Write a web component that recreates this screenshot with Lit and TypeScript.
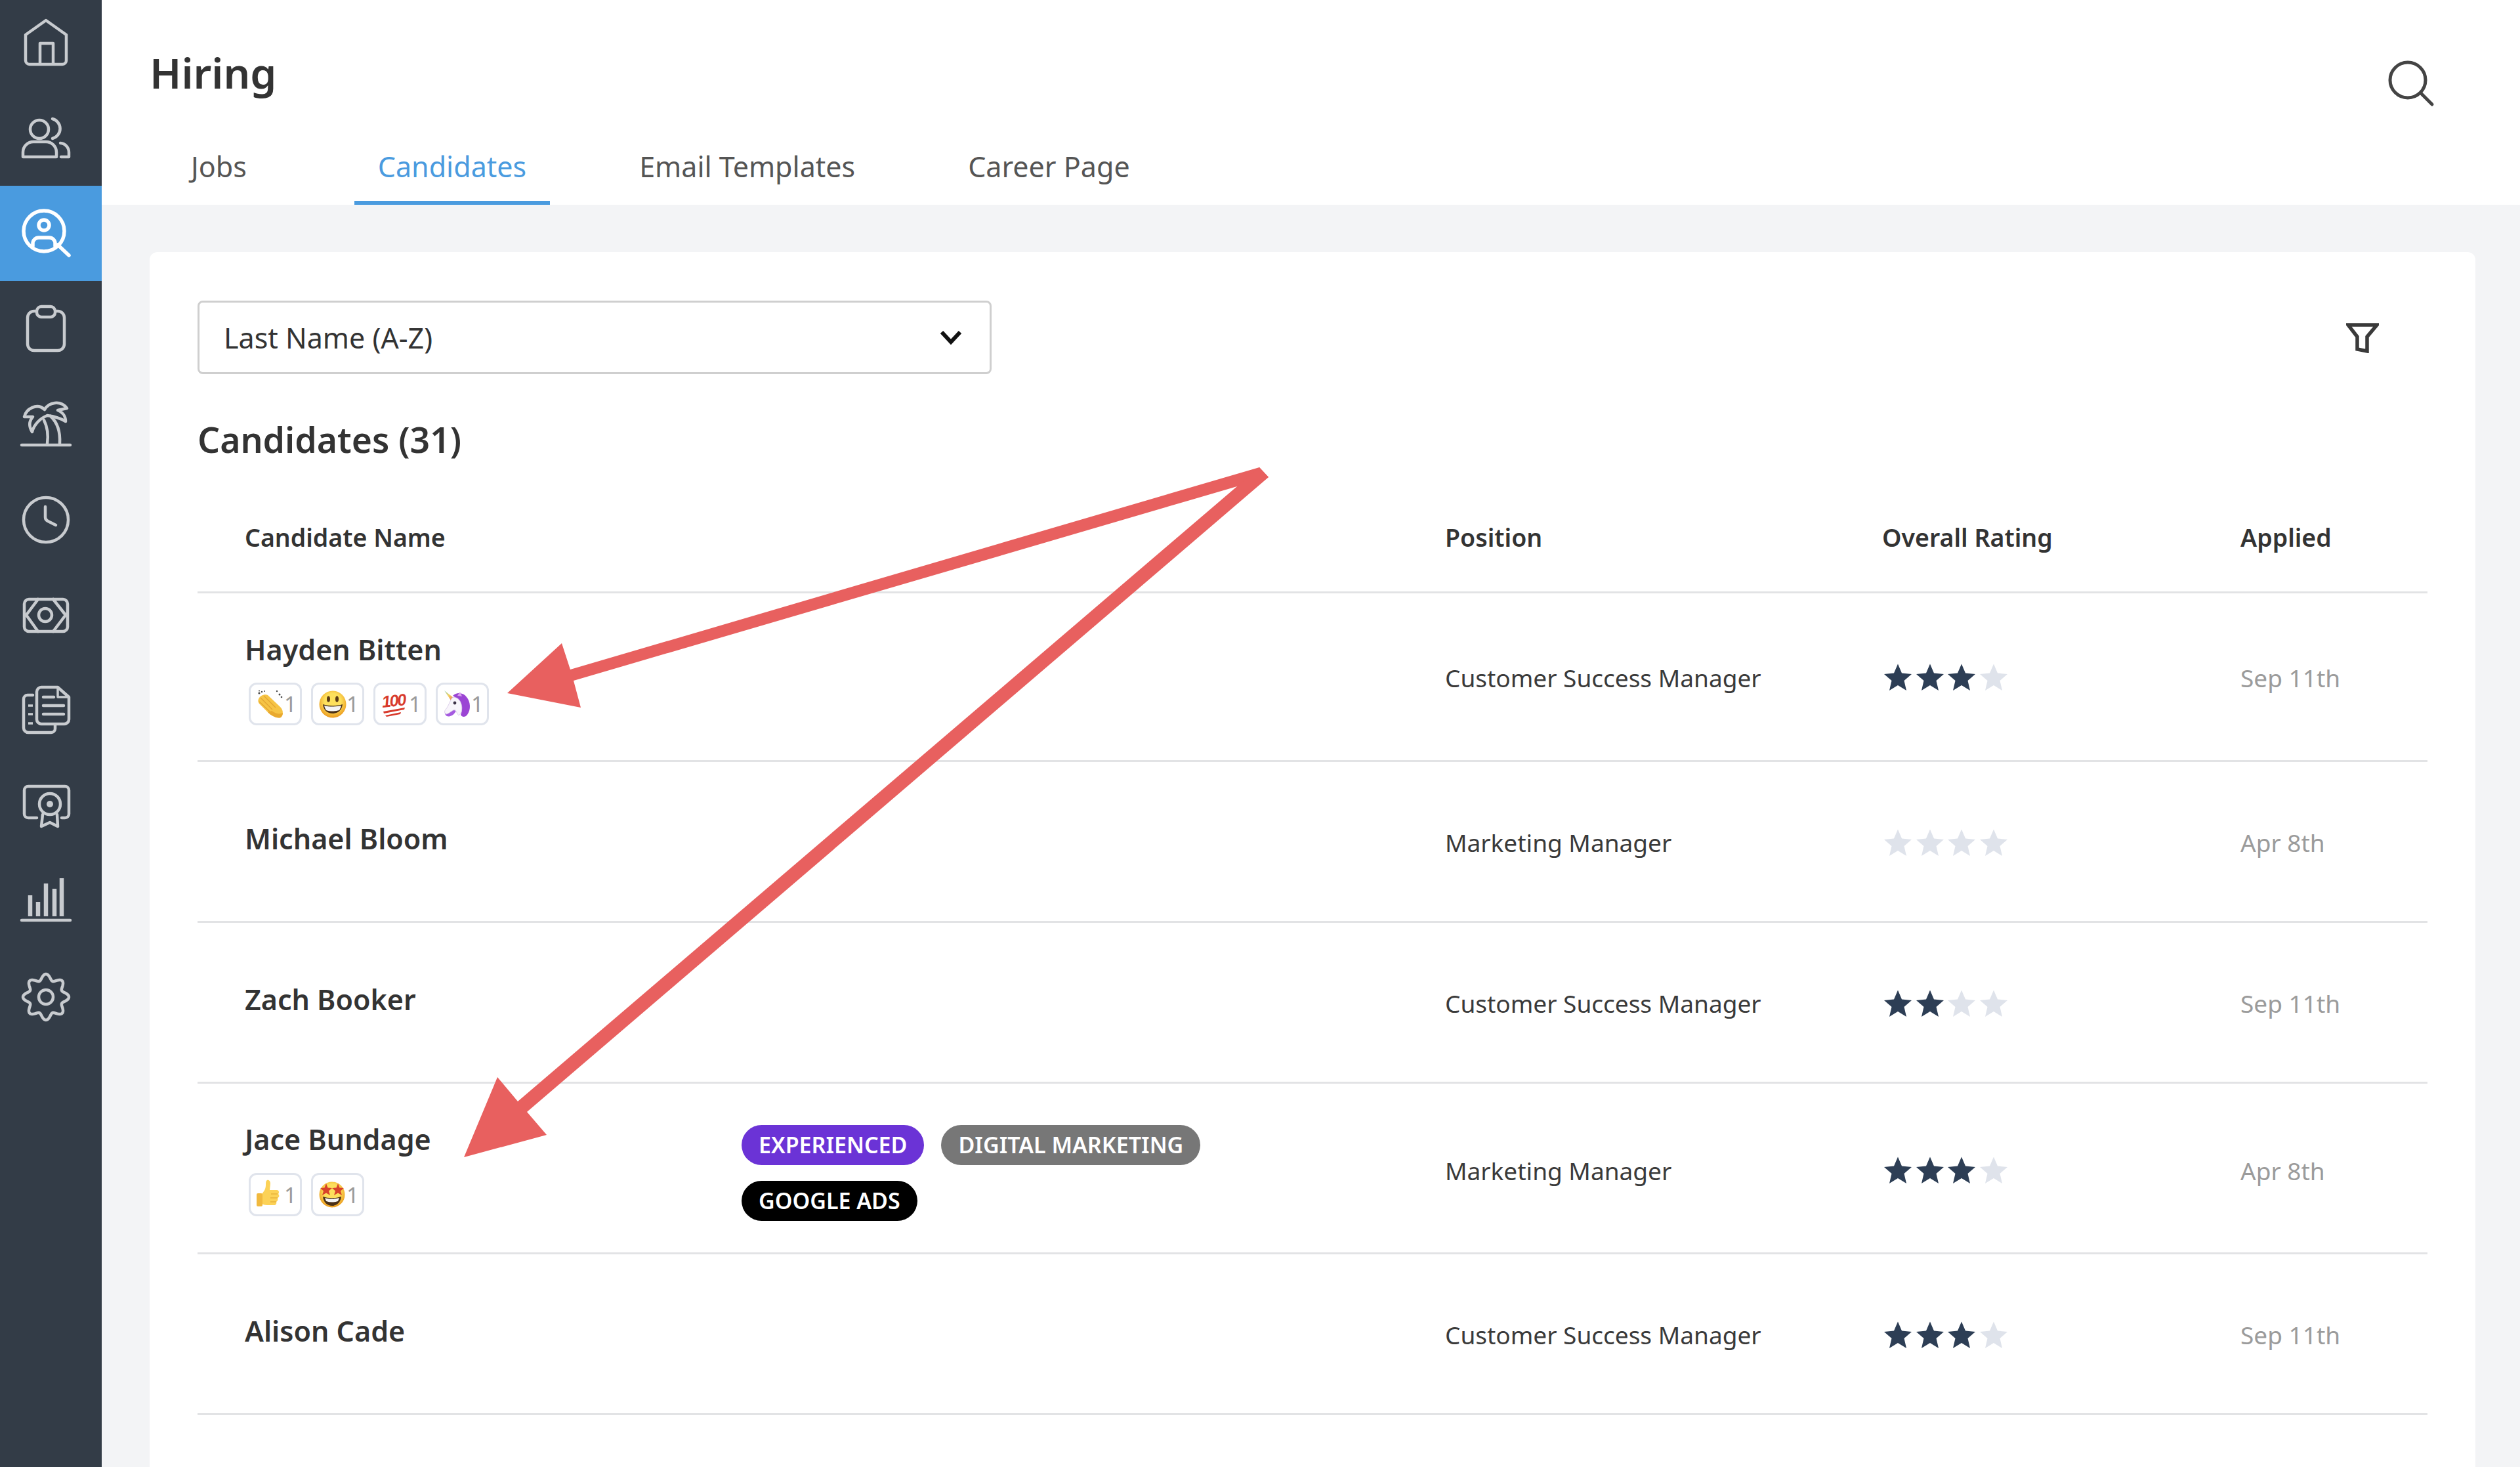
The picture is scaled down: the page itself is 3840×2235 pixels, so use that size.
import { LitElement, html, css, svg } from "lit";
import { customElement } from "lit/decorators.js";

// gear outline is a wavy circle, easier to compute than to write out
const gearPath = () => {
  const pts: string[] = [];
  for (let i = 0; i < 160; i++) {
    const a = (i / 160) * Math.PI * 2;
    const r = 30.5 + 4.5 * Math.cos(8 * a);
    pts.push(`${(40 + r * Math.sin(a)).toFixed(2)} ${(40 - r * Math.cos(a)).toFixed(2)}`);
  }
  return `M${pts.join("L")}Z`;
};

const NAV = [
  svg`<path d="M9 28 40 6l31 22v39a6 6 0 0 1-6 6H15a6 6 0 0 1-6-6Z"/><path d="M31 72V41h20v31"/>`,
  svg`<circle cx="30" cy="27" r="14"/><path d="M5 69v-7a16 16 0 0 1 16-16h19a16 16 0 0 1 16 16v7Z"/><path d="M50 11a15.500 15.500 0 0 1 0 30"/><path d="M62 48a14 14 0 0 1 13 14v7H63"/>`,
  svg`<circle cx="37" cy="37" r="31"/><circle cx="37" cy="28" r="8"/><path d="M20 60v-4a9 9 0 0 1 9-9h16a9 9 0 0 1 9 9v4"/><path d="m58 58 17 16"/>`,
  svg`<rect x="12" y="13" width="56" height="60" rx="10"/><rect x="26" y="6" width="28" height="16" rx="7" class="plug"/>`,
  svg`<path d="M3 72h74"/><path d="M42 70c2-14 0-26-5-36M61 70c1-17-3-32-14-42"/><path d="M7 29C10 17 26 7 38 18 44 7 62 3 72 16l-14 3c8 3 12 10 12 17-10-6-20-8-28-9-10 4-20 13-23 25-5-8-5-16 1-23Z"/>`,
  svg`<circle cx="40" cy="40" r="34"/><path d="M39 20v16q0 4 4 6l12 6"/>`,
  svg`<rect x="7" y="16" width="66" height="49" rx="7"/><circle cx="39" cy="40" r="10"/><path d="M28 16 10 40l18 25M51 16l19 24-19 25"/>`,
  svg`<path d="M33 5h25l17 15v34a7 7 0 0 1-7 7H33a7 7 0 0 1-7-7V12a7 7 0 0 1 7-7Z"/><path d="M58 5v15h17" class="thin"/><path d="M36 20h16M36 33h31M36 46h31"/><path d="M20 17h-8a6 6 0 0 0-6 6v44a7 7 0 0 0 7 7h35a6 6 0 0 0 6-6v-5"/><path d="M13 33h7M13 46h7M13 60h7" class="thin"/>`,
  svg`<path d="M26 58H13a6 6 0 0 1-6-6V16a6 6 0 0 1 6-6h56a6 6 0 0 1 6 6v36a6 6 0 0 1-6 6h-5"/><circle cx="46" cy="37" r="16"/><circle cx="46" cy="37" r="5" class="dot"/><path d="m35 53-2 18 13-6 12 6-1-18"/>`,
  svg`<path d="M3 69h74"/><path d="M16 63V31M28 63V41M40 63V13M53 63V21M64 63V5" class="bar"/>`,
  svg`<path d="${gearPath()}"/><circle cx="40" cy="40" r="11"/>`,
];

const clap = svg`<g fill="#4a4a4a"><circle cx="4" cy="5" r="1.600"/><circle cx="8" cy="3" r="1.200"/><circle cx="12" cy="2" r="1"/><circle cx="4" cy="1.500" r="1"/><circle cx="31" cy="2" r="1.200"/><circle cx="35" cy="7" r="1.500"/><circle cx="38" cy="11" r="1.300"/></g>
  <path d="M3 14C5 9 12 6 17 8L36 26C41 31 41 37 37 42 31 44 23 40 17 34L5 22C2 19 2 16 3 14Z" fill="#f6c445"/>
  <path d="M6 12 24 30M11 9 29 27M4 18 20 33" stroke="#e2a432" stroke-width="1.200" fill="none"/>
  <path d="M37 42C31 44 23 40 17 34l6-2c6 4 11 6 17 3 0 3-1 5-3 7Z" fill="#e9a92f"/>`;

const grin = svg`<circle cx="21" cy="22" r="20.500" fill="url(#face)"/>
  <ellipse cx="14.500" cy="14" rx="2.500" ry="4.600" fill="#5a3a14"/><ellipse cx="27.500" cy="14" rx="2.500" ry="4.600" fill="#5a3a14"/>
  <path d="M6 22c9 3 21 3 30 0-1 9-7 14-15 14S7 31 6 22Z" fill="#4a3016"/>
  <path d="M8 24c8 2 18 2 26 0-1 4-2 5-3 7-6 2-14 2-20 0-1-2-2-3-3-7Z" fill="#f4f4f4"/>`;

const hundred = svg`<text x="1" y="25" class="hundred" transform="rotate(-6 20 20)">100</text>
  <path d="M3 33 36 27 35 30 4 36ZM6 39 30 34 29 37 8 41Z" fill="#d83a2c"/>`;

const unicorn = svg`<path d="M1 1 11 16 15 12Z" fill="url(#horn)"/>
  <path d="M14 9C20 3 30 4 35 11 41 18 42 30 36 38 33 42 28 42 26 38 29 32 28 24 24 18 21 13 17 11 14 9Z" fill="#9b45d4"/>
  <path d="M2 33C1 38 5 42 10 40 14 39 17 36 19 32L10 29Z" fill="#a55ae0"/>
  <path d="M13 12C19 10 25 14 27 22 29 29 27 36 23 39 20 36 19 31 17 30 13 31 9 36 4 37 1 36 1 32 3 30 7 26 9 18 13 12Z" fill="#f8f5fb" stroke="#d6c5e6" stroke-width="0.800"/>
  <circle cx="17" cy="20" r="2.400" fill="#3b3147"/>
  <path d="M21 9l4-6 3 7Z" fill="#d9a3ee"/>`;

const thumb = svg`<path d="M16 0c3-1 5 2 5 5l-1 10h11c3 0 4 4 2 6 2 2 2 5-1 6 1 3 0 5-2 6 1 3-1 5-3 5H16c-4 0-6-1-8-2V21c4-5 6-8 6-14 0-3 0-6 2-7Z" fill="#fcd257"/>
  <rect x="0" y="20" width="9" height="20" rx="2" fill="#f1b93e"/><path d="M22 21h10M21 27h11M21 33h9" stroke="#dea42f" stroke-width="1.100"/>`;

const starEye = (x: number) => svg`<path d="M${x} 5l2.500 6.500 6.500.500-5 4.500 2 6.500-6-3.500-6 3.500 2-6.500-5-4.500 6.500-.500Z" fill="#d8432a"/>`;
const starStruck = svg`<circle cx="20" cy="22" r="19.500" fill="url(#face)"/>${starEye(11)}${starEye(29)}
  <path d="M6 25c8 3 20 3 28 0-1 9-7 14-14 14S7 34 6 25Z" fill="#4a3016"/><path d="M9 27c7 2 15 2 22 0l-2 5c-6 2-12 2-18 0Z" fill="#f4f4f4"/>`;

const EMOJI: Record<string, unknown> = { clap, grin, hundred, unicorn, thumb, starStruck };

const STAR = "M22 1.500 28 15.500 43 17 31.500 27 35 42 22 34 9 42 12.500 27 1 17 16 15.500Z";

type Candidate = {
  name: string;
  position: string;
  rating: number;
  applied: string;
  reactions?: string[];
  tags?: [string, string][];
};

const CANDIDATES: Candidate[] = [
  { name: "Hayden Bitten", position: "Customer Success Manager", rating: 3, applied: "Sep 11th", reactions: ["clap", "grin", "hundred", "unicorn"] },
  { name: "Michael Bloom", position: "Marketing Manager", rating: 0, applied: "Apr 8th" },
  { name: "Zach Booker", position: "Customer Success Manager", rating: 2, applied: "Sep 11th" },
  {
    name: "Jace Bundage",
    position: "Marketing Manager",
    rating: 3,
    applied: "Apr 8th",
    reactions: ["thumb", "starStruck"],
    tags: [["EXPERIENCED", "purple"], ["DIGITAL MARKETING", "grey"], ["GOOGLE ADS", "black"]],
  },
  { name: "Alison Cade", position: "Customer Success Manager", rating: 3, applied: "Sep 11th" },
];

@customElement("app-root")
export class AppRoot extends LitElement {
  static override styles = css`
    :host {
      display: flex;
      position: relative;
      width: 3840px;
      height: 2235px;
      overflow: hidden;
      background: #f3f4f6;
      color: #333;
      font-family: "Noto Sans", sans-serif;
    }
    .sidebar {
      width: 155px;
      flex: none;
      background: #333c47;
    }
    .nav {
      margin-top: -8px;
    }
    .nav-item {
      height: 145.4px;
      display: flex;
      align-items: center;
      padding-left: 30px;
    }
    .nav-item svg {
      width: 80px;
      height: 80px;
      fill: none;
      stroke: #c8cbcf;
      stroke-width: 4.5;
      stroke-linecap: round;
      stroke-linejoin: round;
    }
    .nav-item .plug {
      fill: #333c47;
    }
    .nav-item .thin {
      stroke-width: 3.5;
      stroke-linecap: butt;
    }
    .nav-item .dot {
      fill: #c8cbcf;
      stroke: none;
    }
    .nav-item .bar {
      stroke-width: 6.5;
      stroke-linecap: butt;
    }
    .nav-item.active {
      background: #4a9bdf;
    }
    .nav-item.active svg {
      stroke: #fff;
      stroke-width: 5.5;
    }
    .main {
      flex: 1;
      min-width: 0;
    }
    .header {
      position: relative;
      height: 312px;
      background: #fff;
      padding-left: 73px;
      box-sizing: border-box;
    }
    h1 {
      margin: 0;
      padding-top: 66px;
      font-size: 64px;
      line-height: 90px;
      font-weight: 600;
      color: #333;
    }
    .search {
      position: absolute;
      left: 3480px;
      top: 88px;
      width: 80px;
      height: 80px;
      fill: none;
      stroke: #444;
      stroke-width: 5;
      stroke-linecap: round;
    }
    .tabs {
      display: flex;
      margin-top: 49px;
      padding-left: 27px;
      font-size: 43px;
      color: #555;
    }
    .tab {
      height: 107px;
      line-height: 98px;
      padding: 0 36px;
      box-sizing: border-box;
      border-bottom: 6px solid transparent;
    }
    .tab + .tab {
      margin-left: 100px;
    }
    .tab.active {
      margin-left: 128px;
      color: #4a9bdf;
      border-bottom-color: #4a9bdf;
    }
    .content {
      padding: 72px 68px 0 73px;
    }
    .card {
      background: #fff;
      border-radius: 12px;
      padding: 74px 73px 0;
      height: 2000px;
      box-sizing: border-box;
    }
    .toolbar {
      display: flex;
      align-items: center;
      justify-content: space-between;
      padding-right: 74px;
    }
    .select {
      width: 1210px;
      height: 112px;
      box-sizing: border-box;
      border: 3px solid #cfcfcf;
      border-radius: 8px;
      display: flex;
      align-items: center;
      justify-content: space-between;
      padding: 0 42px 0 37px;
      font-size: 43px;
      color: #333;
    }
    .select svg {
      width: 34px;
      height: 22px;
      fill: none;
      stroke: #111;
      stroke-width: 6;
    }
    .filter {
      width: 50px;
      height: 46px;
      margin-top: 2px;
      fill: none;
      stroke: #3a3a3a;
      stroke-width: 5.5;
    }
    h2 {
      margin: 65px 0 0;
      font-size: 53.500px;
      line-height: 70px;
      font-weight: 600;
      color: #333;
    }
    .row {
      display: grid;
      grid-template-columns: 829px 1072px 666px 546px 1fr;
      align-items: center;
      border-bottom: 3px solid #e2e3e5;
      min-height: 242px;
      box-sizing: content-box;
      font-size: 37px;
    }
    .row.head {
      min-height: 0;
      height: 176px;
      margin-top: 20px;
      font-weight: 600;
      font-size: 37.500px;
    }
    .row.head > div {
      margin-top: 10px;
    }
    .row.with-reactions {
      min-height: 0;
      padding: 61px 0 53px;
    }
    .row.with-tags {
      min-height: 0;
      padding: 60px 0 48px;
    }
    .name-cell {
      padding-left: 72px;
    }
    .row:not(.with-reactions):not(.with-tags):not(.head) .name-cell {
      margin-bottom: 8px;
    }
    .name {
      font-size: 43px;
      line-height: 50px;
      font-weight: 600;
      color: #333;
    }
    .reactions {
      display: flex;
      gap: 14px;
      margin: 25px 0 0 6px;
    }
    .with-tags .reactions {
      margin-top: 26px;
    }
    .with-tags .name-cell {
      align-self: start;
    }
    .reaction {
      width: 81px;
      height: 65px;
      box-sizing: border-box;
      border: 3px solid #e0e4ec;
      border-radius: 12px;
      display: flex;
      align-items: center;
      padding-left: 9px;
      font-size: 33px;
      line-height: 1;
      color: #9a9a9a;
    }
    .with-tags .reaction {
      height: 66px;
    }
    .reaction svg {
      width: 42px;
      height: 44px;
      flex: none;
      overflow: visible;
    }
    .hundred {
      font-family: "Liberation Sans", sans-serif;
      font-style: italic;
      font-weight: 700;
      font-size: 25px;
      letter-spacing: -2px;
      fill: #d83a2c;
    }
    .tags {
      display: flex;
      flex-wrap: wrap;
      gap: 24px 26px;
      max-width: 740px;
    }
    .with-tags .tags {
      align-self: start;
      margin-top: 3px;
    }
    .tag {
      height: 61px;
      line-height: 60px;
      padding: 0 26px;
      border-radius: 31px;
      color: #fff;
      font-size: 34px;
      font-weight: 600;
    }
    .tag.purple {
      background: #6b33d6;
    }
    .tag.grey {
      background: #777;
    }
    .tag.black {
      background: #000;
    }
    .data {
      margin-top: 3px;
      color: #3a3a3a;
    }
    .with-reactions .data {
      margin-top: 0;
      margin-bottom: 6px;
    }
    .with-tags .data {
      margin-top: 0;
      margin-bottom: 5px;
    }
    .data.date {
      color: #9b9b9b;
    }
    .stars {
      display: flex;
      gap: 4.700px;
      padding-left: 2px;
    }
    .stars svg {
      width: 44px;
      height: 44px;
      fill: #dfe3eb;
    }
    .stars svg.on {
      fill: #2d3e55;
    }
    .arrows {
      position: absolute;
      inset: 0;
      width: 3840px;
      height: 2235px;
      fill: #e8605f;
      pointer-events: none;
    }
  `;

  private renderStars(rating: number) {
    return html`<div class="stars">
      ${[0, 1, 2, 3].map(
        (i) => html`<svg viewBox="0 0 44 44" class=${i < rating ? "on" : ""}><path d=${STAR} /></svg>`
      )}
    </div>`;
  }

  private renderReaction(key: string) {
    return html`<div class="reaction">
      <svg viewBox="0 0 42 44">
        <defs>
          <radialGradient id="face" cx="0.5" cy="0.4" r="0.6">
            <stop offset="0.5" stop-color="#fde05c" />
            <stop offset="1" stop-color="#eb9a1e" />
          </radialGradient>
          <linearGradient id="horn" x1="0" y1="0" x2="1" y2="1">
            <stop offset="0" stop-color="#8fd0c0" />
            <stop offset="0.5" stop-color="#f4d35e" />
            <stop offset="1" stop-color="#e8705f" />
          </linearGradient>
        </defs>
        ${EMOJI[key]}
      </svg>
      <span>1</span>
    </div>`;
  }

  private renderRow(c: Candidate) {
    const rowClass = c.tags ? "row with-tags" : c.reactions ? "row with-reactions" : "row";
    return html`<div class=${rowClass}>
      <div class="name-cell">
        <div class="name">${c.name}</div>
        ${c.reactions
          ? html`<div class="reactions">${c.reactions.map((r) => this.renderReaction(r))}</div>`
          : ""}
      </div>
      <div class="tags">
        ${(c.tags ?? []).map(([label, color]) => html`<span class="tag ${color}">${label}</span>`)}
      </div>
      <div class="data">${c.position}</div>
      <div class="data">${this.renderStars(c.rating)}</div>
      <div class="data date">${c.applied}</div>
    </div>`;
  }

  override render() {
    return html`
      <aside class="sidebar">
        <div class="nav">
          ${NAV.map(
            (icon, i) => html`<div class="nav-item ${i === 2 ? "active" : ""}">
              <svg viewBox="0 0 80 80">${icon}</svg>
            </div>`
          )}
        </div>
      </aside>
      <div class="main">
        <header class="header">
          <h1>Hiring</h1>
          <svg class="search" viewBox="0 0 80 80">
            <circle cx="34" cy="34" r="27" />
            <path d="m54 54 17 17" />
          </svg>
          <nav class="tabs">
            <div class="tab">Jobs</div>
            <div class="tab active">Candidates</div>
            <div class="tab">Email Templates</div>
            <div class="tab">Career Page</div>
          </nav>
        </header>
        <div class="content">
          <section class="card">
            <div class="toolbar">
              <div class="select">
                <span>Last Name (A-Z)</span>
                <svg viewBox="0 0 34 22"><path d="m3 3 14 15L31 3" /></svg>
              </div>
              <svg class="filter" viewBox="0 0 50 46"><path d="M3 3h44L32 21v22l-15-3V21Z" /></svg>
            </div>
            <h2>Candidates (31)</h2>
            <div class="row head">
              <div class="name-cell">Candidate Name</div>
              <div></div>
              <div>Position</div>
              <div>Overall Rating</div>
              <div>Applied</div>
            </div>
            ${CANDIDATES.map((c) => this.renderRow(c))}
          </section>
        </div>
      </div>
      <svg class="arrows" viewBox="0 0 3840 2235">
        <path d="M1919 712 869 1020 856 980 773 1056 885 1078 874 1037 1933 727Z" />
        <path d="M1933 727 803 1694 833 1729 707 1763 758 1641 789 1678 1919 712Z" />
      </svg>
    `;
  }
}
